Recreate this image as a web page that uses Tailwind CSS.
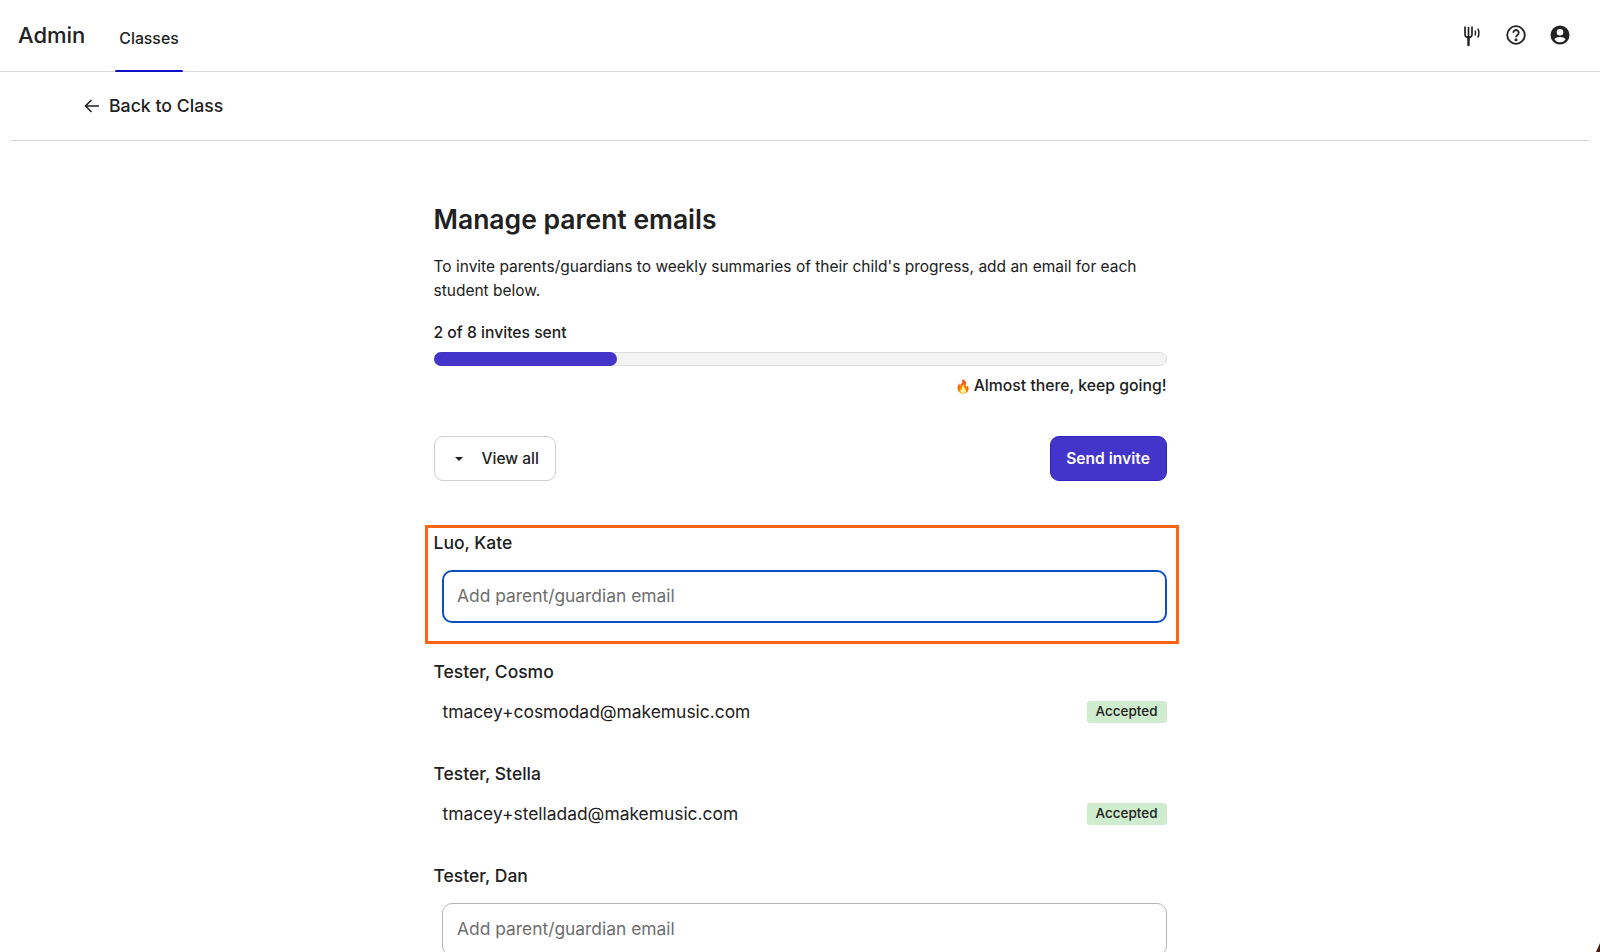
<!DOCTYPE html>
<html lang="en">
<head>
  <meta charset="UTF-8" />
  <title>Manage parent emails</title>
  <script src="https://cdn.jsdelivr.net/npm/@tailwindcss/browser@4"></script>
</head>
<body class="bg-white h-[952px] overflow-hidden font-['Inter',sans-serif] text-[#212121] relative">
  <!-- top nav -->
  <header class="h-[72px] border-b border-[#dcdcdc] flex items-center pl-[18px] pr-[28px]">
    <span class="text-[22px] font-medium leading-none w-[97px] mt-[-1px]">Admin</span>
    <nav class="h-full relative w-[68px] flex items-center justify-center">
      <span class="text-[15.800px] font-medium mt-[6px]">Classes</span>
      <span class="absolute left-0 right-0 bottom-[-1px] h-[2px] bg-[#1010c8] rounded-full"></span>
    </nav>
    <div class="ml-auto flex items-center gap-[20.500px] mt-[-1px]">
      <svg class="w-6 h-6" viewBox="0 0 24 24" fill="none" stroke="#212121" stroke-width="1.700">
        <path d="M6 3.500v7.500c0 2.500 1.500 3.500 3.500 3.500s3.500-1 3.500-3.500V3.500M9.500 4v14" />
        <path d="M9.500 14v8" stroke-width="2.400" stroke-linecap="round" />
        <path d="M16 7.500c.8 1.700.8 3.300 0 5M18.800 5.500c1.500 3 1.500 6 0 9" stroke-width="1.500" />
      </svg>
      <svg class="w-6 h-6" viewBox="0 0 24 24" fill="none" stroke="#212121" stroke-width="1.800">
        <circle cx="12" cy="12" r="8.800" />
        <path d="M9.300 9.700a2.700 2.700 0 1 1 4.200 2.300c-1 .7-1.500 1.200-1.500 2.300" />
        <circle cx="12" cy="16.800" r=".6" fill="#212121" />
      </svg>
      <svg class="w-6 h-6" viewBox="0 0 24 24" fill="#212121">
        <path d="M12 2.500a9.500 9.500 0 1 0 0 19 9.500 9.500 0 0 0 0-19Zm0 3.500a3.300 3.300 0 1 1 0 6.600 3.300 3.300 0 0 1 0-6.600Zm0 13.300a7 7 0 0 1-5.600-2.900c.9-1.500 3.300-2.300 5.600-2.300s4.700.8 5.600 2.300a7 7 0 0 1-5.600 2.900Z" />
      </svg>
    </div>
  </header>

  <!-- back row -->
  <div class="mx-[11px] h-[69px] border-b border-[#d6d6d6] flex items-center pl-[72px]">
    <svg class="w-[18px] h-[18px] mr-[8px]" viewBox="0 0 18 18" fill="none" stroke="#212121" stroke-width="1.600">
      <path d="M16 9H2.500M8.500 3 2.500 9l6 6" />
    </svg>
    <span class="text-[17.700px] font-medium">Back to Class</span>
  </div>

  <main class="w-[733px] ml-[433.500px] pt-[59px]">
    <h1 class="text-[26.500px] font-semibold leading-[38px]">Manage parent emails</h1>
    <p class="mt-[17px] text-[15.500px] leading-[24px] w-[720px]">To invite parents/guardians to weekly summaries of their child's progress, add an email for each student below.</p>
    <div class="mt-[18px] text-[15.700px] font-medium leading-[24px]">2 of 8 invites sent</div>
    <div class="mt-[6.500px] h-[14px] rounded-full bg-[#f3f3f3] border border-[#dedede] relative">
      <div class="absolute left-[-1px] top-[-1px] h-[14px] w-[183px] rounded-full bg-[#4335c9]"></div>
    </div>
    <div class="mt-[8.500px] flex justify-end items-center gap-[3px] text-[15.750px] font-medium leading-[24px]">
      <span class="text-[13px]">🔥</span>
      <span>Almost there, keep going!</span>
    </div>

    <div class="mt-[38px] flex justify-between">
      <button class="h-[45px] w-[122px] rounded-[9px] border border-[#cfcfcf] flex items-center pl-[20px] text-[15.500px] font-medium">
        <span class="w-0 h-0 border-x-[4px] border-x-transparent border-t-[4.500px] border-t-[#212121] mr-[19px]"></span>
        View all
      </button>
      <button class="h-[45px] w-[117px] rounded-[9px] border border-[#2f22c4] bg-[#4335c9] text-white text-[15.600px] font-semibold">Send invite</button>
    </div>

    <div class="mt-[49px] text-[17.500px] font-medium leading-[26px]">Luo, Kate</div>
    <div class="mt-[14px] ml-[8.500px] h-[53px] rounded-[10px] border-2 border-[#0b4fc4] flex items-center pl-[13px] text-[17.400px] text-[#6e6e6e]">Add parent/guardian email</div>

    <div class="mt-[36px] text-[17.500px] font-medium leading-[26px]">Tester, Cosmo</div>
    <div class="mt-[14px] ml-[9px] h-[26px] flex items-center justify-between text-[17.400px]">
      <span>tmacey+cosmodad@makemusic.com</span>
      <span class="h-[22px] w-[80px] mt-[-1px] rounded-[3px] bg-[#cfeccf] flex items-center justify-center text-[13.500px] font-medium">Accepted</span>
    </div>

    <div class="mt-[36px] text-[17.500px] font-medium leading-[26px]">Tester, Stella</div>
    <div class="mt-[14px] ml-[9px] h-[26px] flex items-center justify-between text-[17.400px]">
      <span>tmacey+stelladad@makemusic.com</span>
      <span class="h-[22px] w-[80px] mt-[-1px] rounded-[3px] bg-[#cfeccf] flex items-center justify-center text-[13.500px] font-medium">Accepted</span>
    </div>

    <div class="mt-[36px] text-[17.500px] font-medium leading-[26px]">Tester, Dan</div>
    <div class="mt-[14px] ml-[8.500px] h-[53px] rounded-[10px] border border-[#b5b5b5] flex items-center pl-[14px] text-[17.400px] text-[#6e6e6e]">Add parent/guardian email</div>
  </main>

  <!-- annotation box over the first student -->
  <div class="absolute left-[425px] top-[525px] w-[754px] h-[119px] border-[3px] border-[#ff6414]"></div>
  <!-- corner artefact -->
  <div class="absolute right-0 bottom-0 w-0 h-0 border-l-[4px] border-l-transparent border-b-[9px] border-b-[#4a1a10]"></div>
</body>
</html>
